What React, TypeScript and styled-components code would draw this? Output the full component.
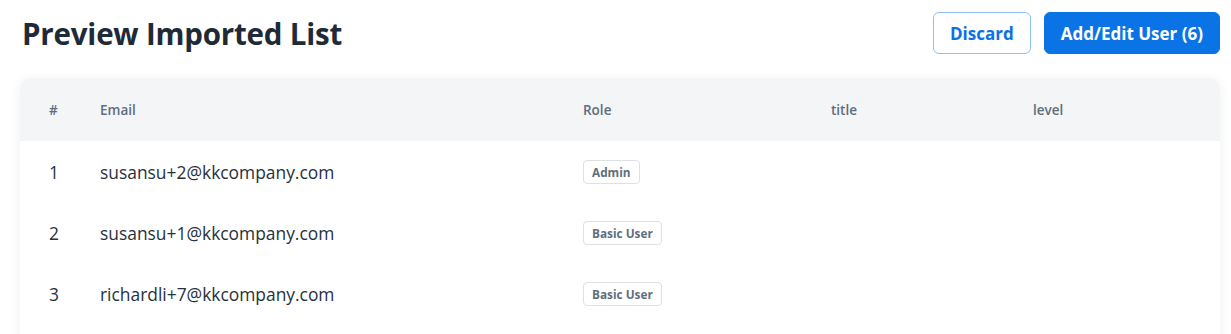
import React from 'react';
import styled, { createGlobalStyle } from 'styled-components';

const GlobalStyle = createGlobalStyle`
  html, body {
    margin: 0;
    padding: 0;
    background: #fff;
    font-family: 'Open Sans', Lato, sans-serif;
  }
`;

const Page = styled.div`
  display: flex;
  flex-direction: column;
  padding: 12px 11px 0 20px;
`;

const Header = styled.div`
  display: flex;
  align-items: center;
  justify-content: space-between;
  height: 42px;
`;

const Title = styled.h1`
  margin: 0 0 0 2px;
  font-size: 29.5px;
  font-weight: 700;
  letter-spacing: -0.2px;
  color: #1e2a36;
`;

const Actions = styled.div`
  display: flex;
  gap: 13px;
`;

const Button = styled.button<{ primary?: boolean }>`
  height: 42px;
  padding: 0 16px;
  border-radius: 6px;
  font-family: inherit;
  font-size: 17px;
  font-weight: 700;
  cursor: pointer;
  border: 1px solid ${(p) => (p.primary ? '#0a74e6' : '#8ec0f5')};
  background: ${(p) => (p.primary ? '#0a74e6' : '#fff')};
  color: ${(p) => (p.primary ? '#fff' : '#0a72e4')};
`;

const Card = styled.div`
  margin-top: 24px;
  padding-bottom: 40px;
  border-radius: 12px;
  overflow: hidden;
  background: #fff;
  box-shadow: 0 2px 12px rgba(30, 40, 60, 0.07);
`;

const Row = styled.div<{ head?: boolean }>`
  display: grid;
  grid-template-columns: 51px 483px 248px 202px 1fr;
  align-items: center;
  padding-left: 29px;
  height: ${(p) => (p.head ? '63px' : '61px')};
  background: ${(p) => (p.head ? '#f3f5f7' : '#fff')};
`;

const HeadCell = styled.div`
  font-size: 13.5px;
  font-weight: 600;
  color: #5e6e7e;
`;

const Cell = styled.div`
  font-size: 17.4px;
  color: #27313c;
`;

const Badge = styled.span`
  display: inline-flex;
  align-items: center;
  height: 22px;
  padding: 0 8px;
  border: 1px solid #dde1e6;
  border-radius: 4px;
  font-size: 11.8px;
  font-weight: 700;
  color: #5e6e7e;
`;

const users = [
  { email: 'susansu+2@kkcompany.com', role: 'Admin' },
  { email: 'susansu+1@kkcompany.com', role: 'Basic User' },
  { email: 'richardli+7@kkcompany.com', role: 'Basic User' },
];

const App = (): JSX.Element => {
  return (
    <>
      <GlobalStyle />
      <Page>
        <Header>
          <Title>Preview Imported List</Title>
          <Actions>
            <Button>Discard</Button>
            <Button primary>Add/Edit User (6)</Button>
          </Actions>
        </Header>
        <Card>
          <Row head>
            <HeadCell>#</HeadCell>
            <HeadCell>Email</HeadCell>
            <HeadCell>Role</HeadCell>
            <HeadCell>title</HeadCell>
            <HeadCell>level</HeadCell>
          </Row>
          {users.map((u, i) => (
            <Row key={u.email}>
              <Cell>{i + 1}</Cell>
              <Cell>{u.email}</Cell>
              <div>
                <Badge>{u.role}</Badge>
              </div>
              <Cell />
              <Cell />
            </Row>
          ))}
        </Card>
      </Page>
    </>
  );
};

export default App;
